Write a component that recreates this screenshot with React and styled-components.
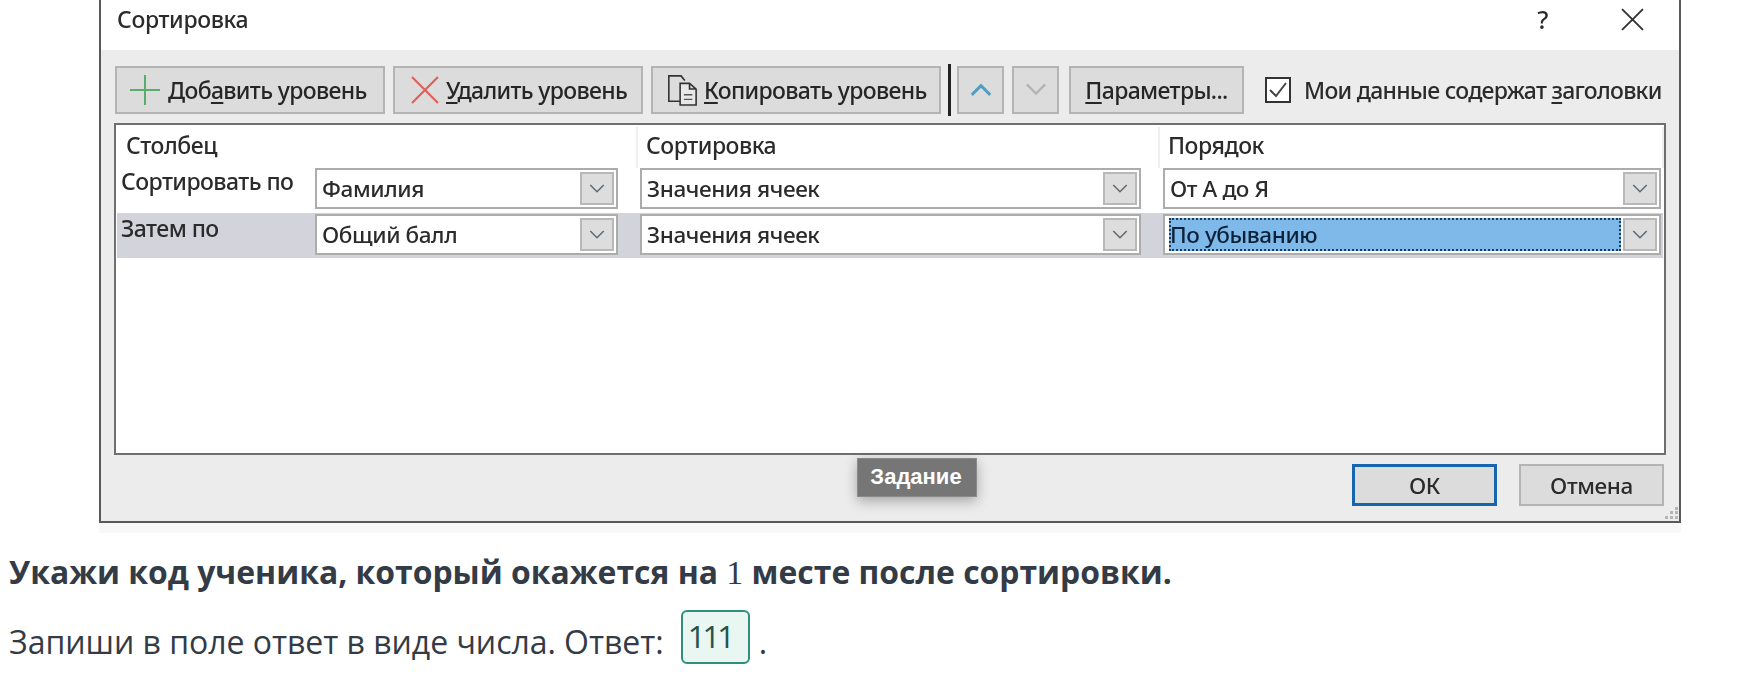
import React from "react";
import styled, { createGlobalStyle } from "styled-components";

const Global = createGlobalStyle`
  html, body { margin: 0; padding: 0; background: #fff; }
  body { width: 1750px; height: 694px; overflow: hidden; font-family: "Open Sans", sans-serif; }
`;

const Page = styled.div`
  width: 1750px;
  height: 694px;
  display: flex;
  flex-direction: column;
`;

const ShotWrap = styled.div`
  margin-left: 99px;
  width: 1582px;
  padding-bottom: 10px;
  background: #f8f8f8;
  position: relative;
`;

const Dialog = styled.div`
  height: 523px;
  box-sizing: border-box;
  border-left: 2px solid #5a5a5a;
  border-right: 2px solid #5a5a5a;
  border-bottom: 2px solid #5a5a5a;
  background: #ececec;
  display: flex;
  flex-direction: column;
  font-family: "Noto Sans", "Open Sans", sans-serif;
  font-weight: 500;
  color: #2b2b2b;
  filter: blur(0.45px);
`;

const TitleBar = styled.div`
  height: 50px;
  flex: none;
  background: #fff;
  display: flex;
  align-items: center;
  padding: 0 24px 0 16px;
  font-size: 23px;
  letter-spacing: -0.35px;
`;

const Title = styled.span`
  flex: 1;
  margin-top: -12px;
`;

const Help = styled.span`
  font-size: 25px;
  margin: -12px 73px 0 0;
  font-weight: 500;
`;

const CloseIcon = styled.svg`
  width: 23px;
  height: 23px;
  margin: -12px 11px 0 0;
`;

const Toolbar = styled.div`
  height: 73px;
  flex: none;
  display: flex;
  align-items: flex-start;
  padding: 16px 0 0 14px;
  box-sizing: border-box;
`;

const ToolButton = styled.div`
  width: ${(p) => p.$w}px;
  margin-right: ${(p) => p.$mr ?? 8}px;
  height: 48px;
  flex: none;
  box-sizing: border-box;
  border: 2px solid #b4b4b4;
  background: #dcdcdc;
  display: flex;
  align-items: center;
  justify-content: ${(p) => (p.$center ? "center" : "flex-start")};
  padding-left: ${(p) => p.$pl ?? 0}px;
  font-size: 23px;
  letter-spacing: -0.65px;
  white-space: nowrap;
  color: #262626;
  svg { flex: none; }
`;

const Key = styled.span`
  text-decoration: underline;
  text-underline-offset: 3px;
  text-decoration-thickness: 2px;
`;

const Separator = styled.div`
  width: 3px;
  height: 52px;
  margin: -2px 6px 0 0;
  background: #222;
  flex: none;
`;

const CheckBox = styled.svg`
  width: 26px;
  height: 26px;
  margin: 11px 13px 0 21px;
  flex: none;
`;

const CheckLabel = styled.span`
  font-size: 23px;
  letter-spacing: -0.72px;
  white-space: nowrap;
  margin-top: 8px;
`;

const ListBox = styled.div`
  margin-left: 13px;
  width: 1552px;
  height: 332px;
  box-sizing: border-box;
  flex: none;
  border: 2px solid #6f6f6f;
  background: #fff;
  padding-top: 2px;
`;

const HeaderRow = styled.div`
  height: 41px;
  display: grid;
  grid-template-columns: 522px 522px 1fr;
`;

const HeaderCell = styled.div`
  font-size: 23px;
  letter-spacing: -0.45px;
  padding: 3px 0 0 ${(p) => p.$pl}px;
  border-right: 2px solid #f0f0f0;
  line-height: 30px;
`;

const Row = styled.div`
  display: grid;
  grid-template-columns: 176px 303px 501px 498px;
  column-gap: 22px;
  width: 1546px;
  margin-left: 1px;
  box-sizing: border-box;
  height: 45px;
  background: ${(p) => (p.$shaded ? "#d3d3db" : "transparent")};
`;

const RowLabel = styled.div`
  font-size: 23px;
  letter-spacing: -0.55px;
  padding-left: 4px;
  line-height: 28px;
  margin-top: ${(p) => p.$mt}px;
  white-space: nowrap;
`;

const Combo = styled.div`
  height: 41px;
  box-sizing: border-box;
  border: 2px solid #acacac;
  background: #fff;
  display: flex;
  align-items: center;
  padding: 2px 2px 2px 4px;
  margin-top: ${(p) => p.$mt ?? 0}px;
  font-size: 22.5px;
  letter-spacing: -0.4px;
`;

const ComboText = styled.div`
  flex: 1;
  align-self: stretch;
  display: flex;
  align-items: center;
  margin-right: 2px;
  padding-left: 1px;
  ${(p) =>
    p.$selected &&
    `background:#7fb9ea; outline:2px dotted #1d3a5c; outline-offset:-2px; color:#0d2238;`}
`;

const ComboBtn = styled.div`
  width: 34px;
  flex: none;
  align-self: stretch;
  box-sizing: border-box;
  border: 2px solid #b8b8b8;
  background: #dddddd;
  display: flex;
  align-items: center;
  justify-content: center;
`;

const Footer = styled.div`
  flex: 1;
  display: flex;
  justify-content: flex-end;
  align-items: flex-start;
  padding: 9px 15px 0 0;
  gap: 22px;
`;

const DlgButton = styled.div`
  width: 145px;
  height: 42px;
  box-sizing: border-box;
  border: ${(p) => (p.$primary ? "3px solid #1765ac" : "2px solid #b4b4b4")};
  background: #dcdcdc;
  display: flex;
  align-items: center;
  justify-content: center;
  font-size: 22.5px;
  letter-spacing: -0.4px;
`;

const Grip = styled.svg`
  position: absolute;
  right: 2px;
  bottom: 13px;
  width: 14px;
  height: 14px;
`;

const Tag = styled.div`
  position: absolute;
  left: 758px;
  top: 458px;
  width: 120px;
  height: 39px;
  padding: 0 2px 2px 0;
  background: #767676;
  color: #fff;
  font-family: "Liberation Sans", Arial, sans-serif;
  font-weight: 700;
  font-size: 22px;
  display: flex;
  align-items: center;
  justify-content: center;
  border: 1px solid #8a8a8a;
  box-sizing: border-box;
  box-shadow: 0 4px 12px rgba(0, 0, 0, 0.3);
`;

const Question = styled.p`
  margin: 19px 0 0 9px;
  font-size: 31.9px;
  line-height: 40px;
  font-weight: 700;
  color: #333b46;
  white-space: nowrap;
`;

const MathNum = styled.span`
  font-family: "Liberation Serif", serif;
  font-weight: 400;
  font-size: 34px;
`;

const AnswerLine = styled.div`
  margin: 17px 0 0 9px;
  display: flex;
  align-items: center;
  font-size: 32px;
  letter-spacing: -0.03px;
  color: #333b46;
  white-space: nowrap;
  height: 54px;
`;

const AnswerText = styled.span`
  margin-top: 9px;
`;

const AnswerBox = styled.div`
  width: 69px;
  height: 54px;
  box-sizing: border-box;
  margin: 0 9px 0 17px;
  border: 2px solid #2f8f7c;
  border-radius: 6px;
  background: #eaf6f2;
  padding: 0 0 2px 5px;
  display: flex;
  align-items: center;
  color: #26524a;
  font-size: 31px;
  letter-spacing: -3px;
`;

const Chevron = ({ color = "#5f6a72", size = 16, up = false, sw = 1.6 }) => (
  <svg width={size} height={size * 0.6} viewBox="0 0 16 10" fill="none">
    <path d={up ? "M1 9 L8 2 L15 9" : "M1 1 L8 8 L15 1"} stroke={color} strokeWidth={sw} />
  </svg>
);

const ComboField = ({ text, selected, mt }) => (
  <Combo $mt={mt}>
    <ComboText $selected={selected}>{text}</ComboText>
    <ComboBtn>
      <Chevron />
    </ComboBtn>
  </Combo>
);

export default function App() {
  return (
    <Page>
      <Global />
      <ShotWrap>
        <Dialog>
          <TitleBar>
            <Title>Сортировка</Title>
            <Help>?</Help>
            <CloseIcon viewBox="0 0 22 22" fill="none">
              <path d="M1 1 L21 21 M21 1 L1 21" stroke="#333" strokeWidth="1.8" />
            </CloseIcon>
          </TitleBar>
          <Toolbar>
            <ToolButton $w={270} $pl={13}>
              <svg width="30" height="30" viewBox="0 0 30 30" fill="none" style={{ marginRight: 8 }}>
                <path d="M15 0 V30 M0 15 H30" stroke="#58ad6d" strokeWidth="2" />
              </svg>
              <span>
                Доб<Key>а</Key>вить уровень
              </span>
            </ToolButton>
            <ToolButton $w={250} $pl={16}>
              <svg width="28" height="28" viewBox="0 0 28 28" fill="none" style={{ marginRight: 7 }}>
                <path d="M1 1 L27 27 M27 1 L1 27" stroke="#e0605c" strokeWidth="2.2" />
              </svg>
              <span>
                <Key>У</Key>далить уровень
              </span>
            </ToolButton>
            <ToolButton $w={290} $mr={7} $pl={13}>
              <svg width="32" height="34" viewBox="0 0 34 36" fill="none" style={{ marginRight: 6 }}>
                <path d="M15 30 H3 V3 H16 L20 8" stroke="#333" strokeWidth="1.7" />
                <path d="M15 11 H25 L32 17 V34 H15 Z M25 11 V17 H32" stroke="#333" strokeWidth="1.7" fill="#e8e8e8" />
                <path d="M19 23 H28 M19 28 H28" stroke="#555" strokeWidth="1.5" />
              </svg>
              <span>
                <Key>К</Key>опировать уровень
              </span>
            </ToolButton>
            <Separator />
            <ToolButton $w={47} $mr={8} $center>
              <Chevron up color="#4f9fc4" size={22} sw={2.2} />
            </ToolButton>
            <ToolButton $w={47} $mr={10} $center>
              <Chevron color="#b4b4b4" size={22} sw={1.8} />
            </ToolButton>
            <ToolButton $w={175} $mr={0} $center>
              <span>
                <Key>П</Key>араметры...
              </span>
            </ToolButton>
            <CheckBox viewBox="0 0 26 26" fill="none">
              <rect x="1" y="1" width="24" height="24" stroke="#333" strokeWidth="2" fill="#fff" />
              <path d="M5 13 L11 19 L21 6" stroke="#444" strokeWidth="2" />
            </CheckBox>
            <CheckLabel>
              Мои данные содержат <Key>з</Key>аголовки
            </CheckLabel>
          </Toolbar>
          <ListBox>
            <HeaderRow>
              <HeaderCell $pl={10}>Столбец</HeaderCell>
              <HeaderCell $pl={8}>Сортировка</HeaderCell>
              <HeaderCell $pl={8}>Порядок</HeaderCell>
            </HeaderRow>
            <Row>
              <RowLabel $mt={-1}>Сортировать по</RowLabel>
              <ComboField text="Фамилия" />
              <ComboField text="Значения ячеек" />
              <ComboField text="От А до Я" />
            </Row>
            <Row $shaded>
              <RowLabel $mt={1}>Затем по</RowLabel>
              <ComboField text="Общий балл" mt={1} />
              <ComboField text="Значения ячеек" mt={1} />
              <ComboField text="По убыванию" selected mt={1} />
            </Row>
          </ListBox>
          <Footer>
            <DlgButton $primary>ОК</DlgButton>
            <DlgButton>Отмена</DlgButton>
          </Footer>
        </Dialog>
        <Grip viewBox="0 0 14 14" fill="#b5b5b5">
          <rect x="10" y="1" width="3" height="3" />
          <rect x="5" y="5" width="3" height="3" />
          <rect x="10" y="5" width="3" height="3" />
          <rect x="0" y="10" width="3" height="3" />
          <rect x="5" y="10" width="3" height="3" />
          <rect x="10" y="10" width="3" height="3" />
        </Grip>
        <Tag>Задание</Tag>
      </ShotWrap>
      <Question>
        Укажи код ученика, который окажется на <MathNum>1</MathNum> месте после сортировки.
      </Question>
      <AnswerLine>
        <AnswerText>Запиши в поле ответ в виде числа. Ответ:</AnswerText>
        <AnswerBox>111</AnswerBox>
        <AnswerText>.</AnswerText>
      </AnswerLine>
    </Page>
  );
}
